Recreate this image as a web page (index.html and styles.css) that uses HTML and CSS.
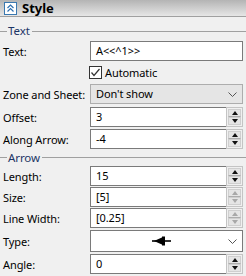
FILE: index.html
```html
<!DOCTYPE html>
<html lang="en">
<head>
    <meta charset="UTF-8">
    <title>Style</title>
    <link rel="stylesheet" href="styles.css">
</head>
<body>
    <div class="panel">
        <div class="header">
            <span class="collapse">
                <svg width="13" height="13" viewBox="0 0 13 13">
                    <rect x="0.5" y="0.5" width="12" height="12" fill="#fff" stroke="#3a78b0"/>
                    <polyline points="3.5,6 6.5,3 9.5,6" fill="none" stroke="#2d6fb0" stroke-width="1.2"/>
                    <polyline points="3.5,9.5 6.5,6.5 9.5,9.5" fill="none" stroke="#2d6fb0" stroke-width="1.2"/>
                </svg>
            </span>
            <span class="title">Style</span>
        </div>

        <div class="group"><span class="stub"></span><span class="legend">Text</span><span class="rule"></span></div>

        <div class="row">
            <label>Text:</label>
            <div class="field"><span class="value">A&lt;&lt;^1&gt;&gt;</span></div>
        </div>
        <div class="row check-row">
            <label></label>
            <span class="checkbox">
                <svg width="13" height="13" viewBox="0 0 13 13">
                    <rect x="0.5" y="0.5" width="12" height="12" fill="#fff" stroke="#333"/>
                    <polyline points="2.5,6.5 5,9.5 10.5,3" fill="none" stroke="#333" stroke-width="1.2"/>
                </svg>
            </span>
            <span class="check-label">Automatic</span>
        </div>
        <div class="row gap2">
            <label>Zone and Sheet:</label>
            <div class="combo grey"><span class="value">Don't show</span>
                <svg class="chev" width="9" height="5" viewBox="0 0 9 5"><polyline points="0.5,0.5 4.5,4.5 8.5,0.5" fill="none" stroke="#555"/></svg>
            </div>
        </div>
        <div class="row gap3">
            <label>Offset:</label>
            <div class="spin">
                <div class="field"><span class="value">3</span></div>
                <div class="spinner"><span class="up"></span><span class="down"></span></div>
            </div>
        </div>
        <div class="row gap2">
            <label>Along Arrow:</label>
            <div class="spin">
                <div class="field"><span class="value">-4</span></div>
                <div class="spinner"><span class="up"></span><span class="down"></span></div>
            </div>
        </div>

        <div class="group arrow-group"><span class="stub"></span><span class="legend">Arrow</span><span class="rule"></span></div>

        <div class="row">
            <label>Length:</label>
            <div class="spin">
                <div class="field"><span class="value">15</span></div>
                <div class="spinner"><span class="up"></span><span class="down"></span></div>
            </div>
        </div>
        <div class="row gap1">
            <label>Size:</label>
            <div class="spin">
                <div class="field"><span class="value">[5]</span></div>
                <div class="spinner off"><span class="up"></span><span class="down"></span></div>
            </div>
        </div>
        <div class="row gap1">
            <label>Line Width:</label>
            <div class="spin">
                <div class="field"><span class="value">[0.25]</span></div>
                <div class="spinner off"><span class="up"></span><span class="down"></span></div>
            </div>
        </div>
        <div class="row gap2 tall">
            <label>Type:</label>
            <div class="combo">
                <span class="arrow-type">
                    <svg width="20" height="10" viewBox="0 0 20 10">
                        <line x1="0" y1="5" x2="4" y2="5" stroke="#000" stroke-width="1.6"/>
                        <polygon points="2,5 11,1 11,9" fill="#000"/>
                        <rect x="10" y="0.5" width="3" height="9" fill="#000"/>
                        <line x1="12" y1="5" x2="19" y2="5" stroke="#000" stroke-width="1.6"/>
                    </svg>
                </span>
                <svg class="chev" width="9" height="5" viewBox="0 0 9 5"><polyline points="0.5,0.5 4.5,4.5 8.5,0.5" fill="none" stroke="#555"/></svg>
            </div>
        </div>
        <div class="row gap2">
            <label>Angle:</label>
            <div class="spin">
                <div class="field"><span class="value">0</span></div>
                <div class="spinner"><span class="up"></span><span class="down"></span></div>
            </div>
        </div>
    </div>
</body>
</html>
```

FILE: styles.css
```css
body {
    margin: 0;
    background-color: #f0f0f0;
}
* {
    font-family: "Noto Sans", "Open Sans", sans-serif;
    box-sizing: border-box;
}
.panel {
    width: 246px;
    height: 276px;
    overflow: hidden;
    font-size: 11px;
    letter-spacing: -0.1px;
    color: #000;
}
.header {
    display: flex;
    align-items: center;
    height: 17px;
    padding-left: 4px;
    background: linear-gradient(#b4b4b4, #e6e6e6);
    border-bottom: 1px solid #a0a0a0;
}
.collapse {
    display: flex;
    width: 13px;
    height: 13px;
}
.title {
    margin-left: 5px;
    font-size: 13px;
    font-weight: bold;
    letter-spacing: 0;
    line-height: 16px;
}
.group {
    display: flex;
    align-items: center;
    height: 24px;
    padding-top: 4px;
}
.arrow-group {
    height: 17px;
    padding-top: 0;
}
.stub {
    width: 7px;
    height: 1px;
    background-color: #a0a0a0;
}
.legend {
    padding: 0 2px 0 1px;
    color: #1c3566;
    font-size: 11.5px;
    line-height: 14px;
}
.rule {
    flex: 1;
    height: 1px;
    background-color: #a0a0a0;
}
.row {
    display: flex;
    align-items: center;
    height: 20px;
}
.gap1 { margin-top: 1px; }
.gap2 { margin-top: 2px; }
.gap3 { margin-top: 3px; }
.row.tall { height: 22px; }
.row label {
    width: 90px;
    flex: none;
    padding-left: 3px;
    white-space: nowrap;
}
.field, .combo {
    display: flex;
    align-items: center;
    width: 153px;
    height: 100%;
    background-color: #fff;
    border: 1px solid #7a7a7a;
    padding-left: 5px;
}
.value {
    line-height: 14px;
}
.check-row {
    margin-top: 1px;
}
.checkbox {
    display: flex;
    width: 13px;
    height: 13px;
    margin-left: -1px;
}
.check-label {
    margin-left: 3px;
}
.combo {
    position: relative;
    justify-content: flex-start;
}
.combo.grey {
    background-color: #e5e5e5;
    border-color: #adadad;
}
.chev {
    position: absolute;
    right: 5px;
    top: 50%;
    margin-top: -2px;
}
.arrow-type {
    display: flex;
    margin-left: 56px;
}
.spin {
    display: flex;
    width: 153px;
    height: 100%;
}
.spin .field {
    flex: 1;
    width: auto;
    border-right: none;
}
.spinner {
    display: flex;
    flex-direction: column;
    width: 17px;
    border: 1px solid #c4c4c4;
    background-color: #f0f0f0;
    padding: 1px;
}
.spinner span {
    flex: 1;
    position: relative;
    background-color: #e5e5e5;
    border: 1px solid #cfcfcf;
}
.spinner .up {
    border-bottom-color: #adadad;
}
.spinner span::after {
    content: "";
    position: absolute;
    left: 50%;
    top: 50%;
    margin-left: -3px;
    margin-top: -2px;
    border-left: 3px solid transparent;
    border-right: 3px solid transparent;
}
.spinner .up::after {
    border-bottom: 4px solid #111;
}
.spinner .down::after {
    border-top: 4px solid #111;
}
.spinner.off .up::after {
    border-bottom-color: #a8a8a8;
}
.spinner.off .down::after {
    border-top-color: #a8a8a8;
}
```
